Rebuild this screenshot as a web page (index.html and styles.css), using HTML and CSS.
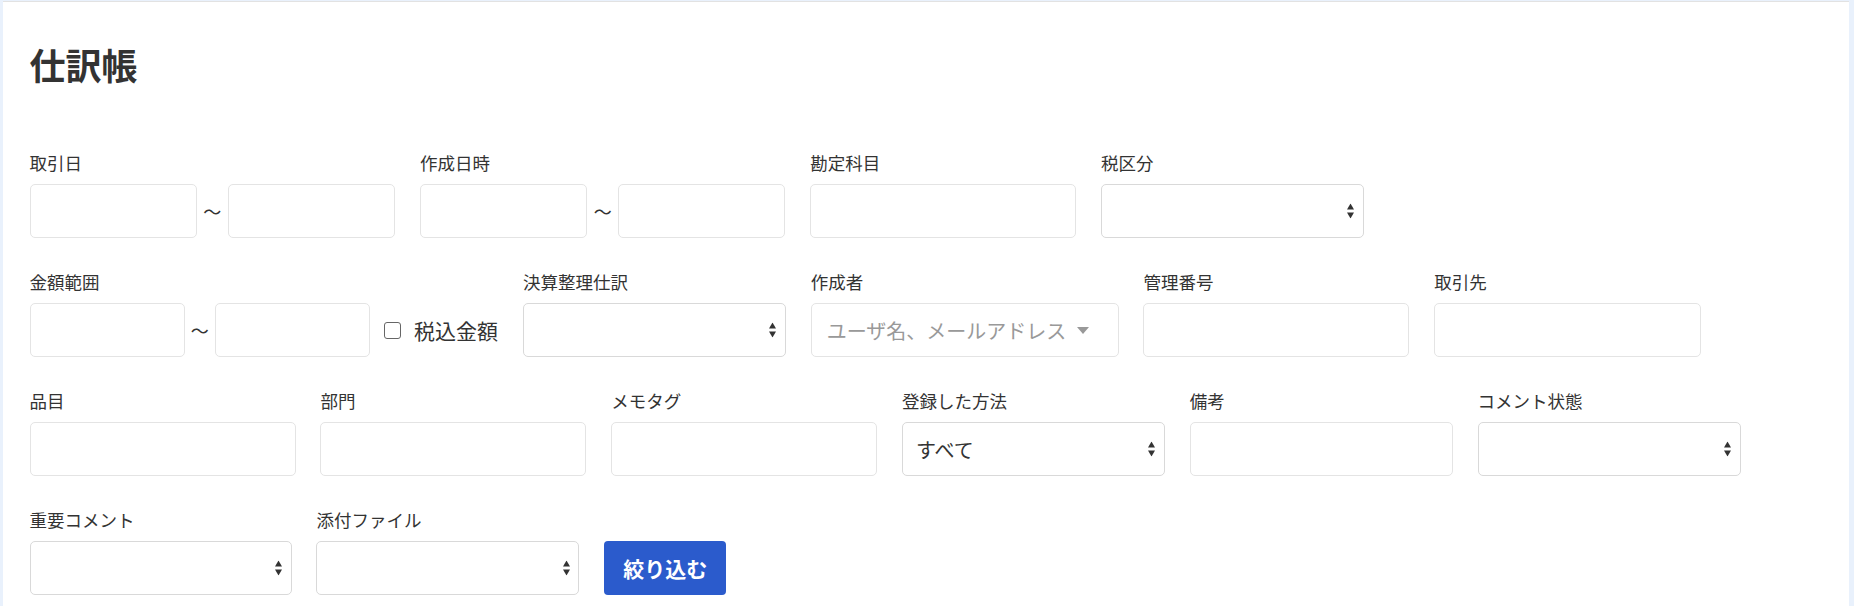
FILE: index.html
```html
<!DOCTYPE html>
<html lang="ja">
<head>
  <meta charset="UTF-8" />
  <meta name="viewport" content="width=device-width, initial-scale=1.0"/>
  <title>仕訳帳</title>
  <link rel="stylesheet" href="styles.css">
</head>
<body>
  <div class="ledger">
    <h1 class="page-title">仕訳帳</h1>
    <form class="filters">
      <div class="filter-row">
        <div class="field">
          <label class="field-label">取引日</label>
          <div class="range">
            <input class="text-input range-date" type="text">
            <span class="tilde">〜</span>
            <input class="text-input range-date" type="text">
          </div>
        </div>
        <div class="field">
          <label class="field-label">作成日時</label>
          <div class="range">
            <input class="text-input range-date" type="text">
            <span class="tilde">〜</span>
            <input class="text-input range-date" type="text">
          </div>
        </div>
        <div class="field field-md">
          <label class="field-label">勘定科目</label>
          <input class="text-input" type="text">
        </div>
        <div class="field field-sm">
          <label class="field-label">税区分</label>
          <div class="select-wrap">
            <select class="select"><option></option></select>
            <svg class="select-arrows" width="7" height="15" viewBox="0 0 7 15"><polygon points="3.5,0 7,6 0,6"/><polygon points="0,9 7,9 3.5,15"/></svg>
          </div>
        </div>
      </div>

      <div class="filter-row">
        <div class="field">
          <label class="field-label">金額範囲</label>
          <div class="range">
            <input class="text-input range-amount" type="text">
            <span class="tilde">〜</span>
            <input class="text-input range-amount" type="text">
            <label class="tax-check"><input type="checkbox"> 税込金額</label>
          </div>
        </div>
        <div class="field field-sm">
          <label class="field-label">決算整理仕訳</label>
          <div class="select-wrap">
            <select class="select"><option></option></select>
            <svg class="select-arrows" width="7" height="15" viewBox="0 0 7 15"><polygon points="3.5,0 7,6 0,6"/><polygon points="0,9 7,9 3.5,15"/></svg>
          </div>
        </div>
        <div class="field field-lg">
          <label class="field-label">作成者</label>
          <div class="user-select">
            <span class="placeholder">ユーザ名、メールアドレス</span>
            <span class="caret"></span>
          </div>
        </div>
        <div class="field field-md">
          <label class="field-label">管理番号</label>
          <input class="text-input" type="text">
        </div>
        <div class="field field-wide">
          <label class="field-label">取引先</label>
          <input class="text-input" type="text">
        </div>
      </div>

      <div class="filter-row">
        <div class="field field-md">
          <label class="field-label">品目</label>
          <input class="text-input" type="text">
        </div>
        <div class="field field-md">
          <label class="field-label">部門</label>
          <input class="text-input" type="text">
        </div>
        <div class="field field-md">
          <label class="field-label">メモタグ</label>
          <input class="text-input" type="text">
        </div>
        <div class="field field-sm">
          <label class="field-label">登録した方法</label>
          <div class="select-wrap">
            <select class="select"><option>すべて</option></select>
            <svg class="select-arrows" width="7" height="15" viewBox="0 0 7 15"><polygon points="3.5,0 7,6 0,6"/><polygon points="0,9 7,9 3.5,15"/></svg>
          </div>
        </div>
        <div class="field field-sm">
          <label class="field-label">備考</label>
          <input class="text-input" type="text">
        </div>
        <div class="field field-sm">
          <label class="field-label">コメント状態</label>
          <div class="select-wrap">
            <select class="select"><option></option></select>
            <svg class="select-arrows" width="7" height="15" viewBox="0 0 7 15"><polygon points="3.5,0 7,6 0,6"/><polygon points="0,9 7,9 3.5,15"/></svg>
          </div>
        </div>
      </div>

      <div class="filter-row">
        <div class="field field-xs">
          <label class="field-label">重要コメント</label>
          <div class="select-wrap">
            <select class="select"><option></option></select>
            <svg class="select-arrows" width="7" height="15" viewBox="0 0 7 15"><polygon points="3.5,0 7,6 0,6"/><polygon points="0,9 7,9 3.5,15"/></svg>
          </div>
        </div>
        <div class="field field-sm">
          <label class="field-label">添付ファイル</label>
          <div class="select-wrap">
            <select class="select"><option></option></select>
            <svg class="select-arrows" width="7" height="15" viewBox="0 0 7 15"><polygon points="3.5,0 7,6 0,6"/><polygon points="0,9 7,9 3.5,15"/></svg>
          </div>
        </div>
        <button class="filter-button" type="button">絞り込む</button>
      </div>
    </form>
  </div>
</body>
</html>
```

FILE: styles.css
```css
body {
  margin: 0;
  background: #e9f1fc;
  font-family: "Noto Sans CJK JP", "Noto Sans", sans-serif;
  color: #333;
}
.ledger {
  box-sizing: border-box;
  background: #fff;
  margin: 1px 5px 0 3px;
  border-top: 1px solid #e2e2e2;
  padding: 40px 26.6px 0;
  min-height: calc(100vh - 1px);
}
.page-title {
  margin: 0 0 64px;
  font-size: 36px;
  line-height: 44px;
  font-weight: 700;
}
.filters {
  display: flex;
  flex-direction: column;
  gap: 31px;
}
.filter-row {
  display: flex;
  align-items: flex-end;
  gap: 24.8px;
}
.field-label {
  display: block;
  font-size: 17.5px;
  line-height: 26px;
  margin-bottom: 8px;
}
.field-xs { width: 262px; }
.field-sm { width: 263px; }
.field-md { width: 266px; }
.field-wide { width: 267px; }
.field-lg { width: 308px; }
.text-input,
.select {
  box-sizing: border-box;
  display: block;
  width: 100%;
  height: 54px;
  margin: 0;
  border: 1px solid #e4e4e4;
  border-radius: 5px;
  background: #fff;
  font-family: inherit;
  font-size: 20px;
  color: #333;
  padding: 0 14px;
  outline: none;
}
.select {
  -webkit-appearance: none;
  appearance: none;
  border-color: #d9d9d9;
  padding-left: 13px;
}
.select-wrap {
  position: relative;
}
.select-arrows {
  position: absolute;
  right: 9.5px;
  top: 50%;
  transform: translateY(-50%);
  fill: #333;
  pointer-events: none;
}
.range {
  display: flex;
  align-items: center;
}
.range-date { width: 167.5px; }
.range-amount { width: 155px; }
.tilde {
  width: 30.5px;
  text-align: center;
  font-size: 18px;
}
.tax-check {
  display: flex;
  align-items: center;
  gap: 13.5px;
  margin-left: 13.5px;
  font-size: 21px;
  white-space: nowrap;
}
.tax-check input {
  -webkit-appearance: none;
  appearance: none;
  box-sizing: border-box;
  width: 17px;
  height: 17px;
  margin: 0;
  border: 1.5px solid #666;
  border-radius: 3px;
  background: #fff;
}
.user-select {
  box-sizing: border-box;
  display: flex;
  align-items: center;
  justify-content: space-between;
  height: 54px;
  padding: 0 29px 0 15px;
  border: 1px solid #e4e4e4;
  border-radius: 5px;
}
.placeholder {
  color: #999;
  font-size: 20px;
}
.caret {
  width: 0;
  height: 0;
  border-top: 7px solid #999;
  border-left: 6.5px solid transparent;
  border-right: 6.5px solid transparent;
}
.filter-button {
  width: 122px;
  height: 54px;
  border: none;
  border-radius: 4px;
  background: #2b5bcc;
  color: #fff;
  font-family: inherit;
  font-size: 21px;
  font-weight: 700;
  cursor: pointer;
}
```
